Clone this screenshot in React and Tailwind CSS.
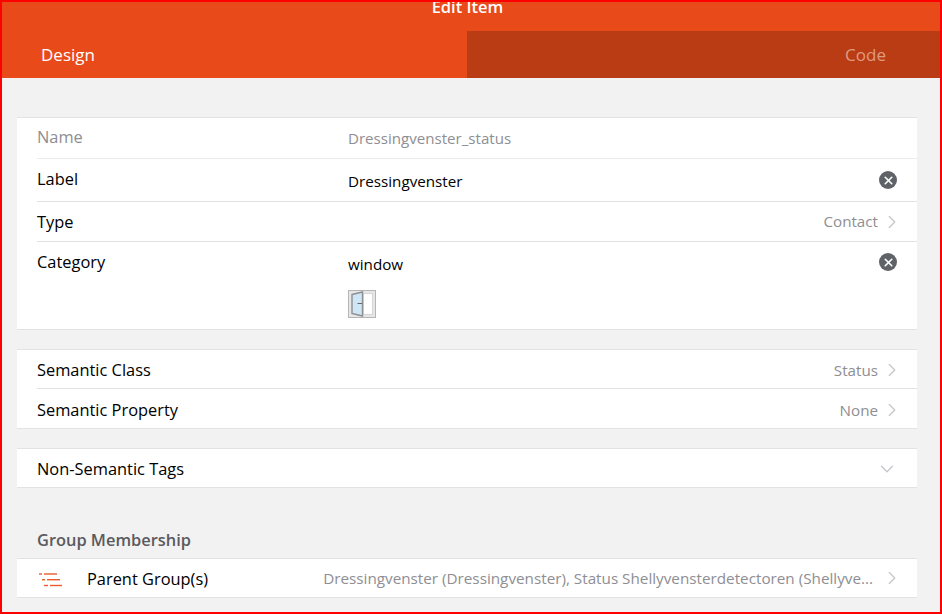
import React from "react";
import { ChevronRight, ChevronDown, X } from "lucide-react";

const Chevron = () => <ChevronRight size={22} strokeWidth={1.5} className="text-[#c7c7cc] ml-[3px] mr-[-6px]" />;
const Clear = () => (
  <span className="w-[18px] h-[18px] rounded-full bg-[#5f6368] flex items-center justify-center">
    <X size={13} strokeWidth={3} className="text-white" />
  </span>
);

function Row({ label, children, h, line = true }) {
  return (
    <div className="pl-[20px]">
      <div className={`flex items-center pr-[20px] ${h} ${line ? "border-b border-[#e2e2e2]" : ""}`}>
        <span className="text-[16.4px] text-black">{label}</span>
        <div className="flex-1 flex items-center justify-end">{children}</div>
      </div>
    </div>
  );
}

const Val = ({ children }) => <span className="text-[15.2px] text-[#8e8e93]">{children}</span>;

export default function App() {
  return (
    <div className="h-[614px] w-[942px] border-2 border-[#ff0000] bg-[#f2f2f2] overflow-hidden font-['Open_Sans',sans-serif]">
      <div className="h-[29px] bg-[#e84b19] flex justify-center overflow-hidden pr-[7px]">
        <span className="text-[16.5px] font-semibold text-white leading-[20px] mt-[-5px]">Edit Item</span>
      </div>
      <div className="h-[47px] flex">
        <div className="w-[465px] bg-[#e84b19] pl-[39px] flex items-center text-white text-[17px]">Design</div>
        <div className="flex-1 bg-[#b93c14] pr-[54px] flex items-center justify-end text-[#e09a80] text-[17px]">Code</div>
      </div>

      <div className="pt-[39px] px-[15px]">
        <div className="w-[900px] bg-white border-y border-[#e2e2e2]">
          <div className="pl-[20px]">
            <div className="flex items-center h-[41px] border-b border-[#ececec] pr-[20px]">
              <span className="w-[311px] text-[16.4px] text-[#8e8e93] mt-[-2px]">Name</span>
              <span className="text-[15.1px] text-[#8e8e93] mt-[1px]">Dressingvenster_status</span>
            </div>
            <div className="flex items-center h-[43px] border-b border-[#e2e2e2] pr-[20px]">
              <span className="w-[311px] text-[16.4px] text-black mt-[-1px]">Label</span>
              <span className="flex-1 text-[15.2px] text-black mt-[2px]">Dressingvenster</span>
              <Clear />
            </div>
            <div className="flex items-center h-[40px] border-b border-[#e2e2e2] pr-[20px]">
              <span className="flex-1 text-[16.4px] text-black mt-[2px]">Type</span>
              <Val>Contact</Val>
              <Chevron />
            </div>
            <div className="flex h-[87px] pr-[20px] pt-[8px]">
              <span className="w-[311px] text-[16.4px] text-black leading-[24px]">Category</span>
              <div className="flex-1">
                <div className="text-[15.2px] text-black leading-[28px]">window</div>
                <svg width="28" height="28" viewBox="0 0 28 28" className="mt-[12px]">
                  <rect x="0.5" y="0.5" width="27" height="27" fill="#e6e6e6" stroke="#b5b5b5" />
                  <rect x="15.5" y="3.5" width="9" height="21" fill="#fff" stroke="#d6d6d6" />
                  <path d="M4 4.5 L14.5 2 V26 L4 23.5 Z" fill="#cfe6f7" stroke="#8f8f8f" strokeWidth="1.4" />
                  <path d="M9.5 13.5 H14" stroke="#666" />
                </svg>
              </div>
              <div className="pt-[3px]"><Clear /></div>
            </div>
          </div>
        </div>

        <div className="mt-[19px] w-[900px] bg-white border-y border-[#e2e2e2]">
          <Row label="Semantic Class" h="h-[39px] pt-[2px]"><Val>Status</Val><Chevron /></Row>
          <Row label="Semantic Property" h="h-[39px] pt-[4px]" line={false}><Val>None</Val><Chevron /></Row>
        </div>

        <div className="mt-[19px] w-[900px] bg-white border-y border-[#e2e2e2]">
          <Row label="Non-Semantic Tags" h="h-[38px] pt-[2px]" line={false}>
            <ChevronDown size={22} strokeWidth={1.5} className="text-[#c7c7cc] mr-[-1px]" />
          </Row>
        </div>

        <div className="mt-[37px] mb-[3px] pl-[20px] h-[30px] flex items-center text-[16.4px] font-semibold text-[#5a5a5f]">Group Membership</div>

        <div className="w-[900px] bg-white border-y border-[#e2e2e2] h-[40px] flex items-center pl-[22px] pr-[20px]">
          <svg width="24" height="18" viewBox="0 0 24 18" className="shrink-0">
            <g stroke="#ea5a2c" strokeWidth="1.4" fill="none">
              <path d="M0 5 H3" />
              <path d="M5 5 H18" />
              <path d="M3 10.7 H6" />
              <path d="M8 10.7 H21" />
              <path d="M5 16.5 H9" />
              <path d="M11 16.5 H23" />
            </g>
          </svg>
          <span className="ml-[24px] text-[16.4px] text-black mt-[2px]">Parent Group(s)</span>
          <span className="flex-1 text-right text-[15.25px] text-[#8e8e93] whitespace-nowrap mr-[5px]">Dressingvenster (Dressingvenster), Status Shellyvensterdetectoren (Shellyve...</span>
          <Chevron />
        </div>
      </div>
    </div>
  );
}
